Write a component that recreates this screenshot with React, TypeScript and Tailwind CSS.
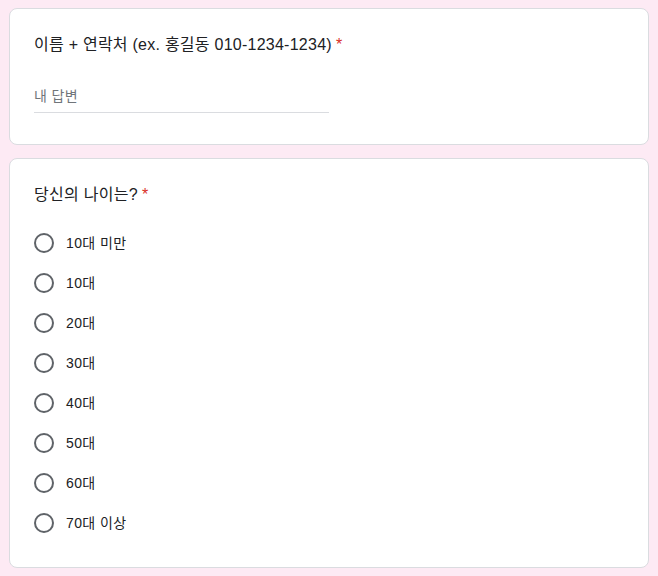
const options = ['10대 미만', '10대', '20대', '30대', '40대', '50대', '60대', '70대 이상'];

function Required() {
  return <span className="ml-1 text-[#d93025]">*</span>;
}

export default function App() {
  return (
    <div
      className="min-h-[576px] w-[658px] bg-[#fdeaf4] pl-[9px] pt-2"
      style={{ fontFamily: '"Liberation Sans", "Noto Sans CJK KR", Arial, sans-serif' }}
    >
      <div className="flex w-[640px] flex-col gap-[13px]">
        <div className="rounded-lg border border-[#dadce0] bg-white px-6 pb-[31px] pt-6">
          <div className="text-[16px] leading-6 tracking-[0.25px] text-[#202124]">
            이름 + 연락처 (ex. 홍길동 010-1234-1234)
            <Required />
          </div>
          <div className="mt-6 flex h-8 w-[295px] items-center border-b border-[#dadce0] text-[14px] tracking-[0.4px] text-[#70757a]">
            내 답변
          </div>
        </div>

        <div className="rounded-lg border border-[#dadce0] bg-white px-6 pb-6 pt-6">
          <div className="text-[16px] leading-6 tracking-[0.3px] text-[#202124]">
            당신의 나이는?
            <Required />
          </div>
          <div className="mt-4 flex flex-col">
            {options.map((o) => (
              <div key={o} className="flex h-10 items-center gap-3">
                <span className="h-5 w-5 rounded-full border-2 border-[#5f6368]" />
                <span className="text-[14px] leading-5 tracking-[0.4px] text-[#202124]">{o}</span>
              </div>
            ))}
          </div>
        </div>
      </div>
    </div>
  );
}
